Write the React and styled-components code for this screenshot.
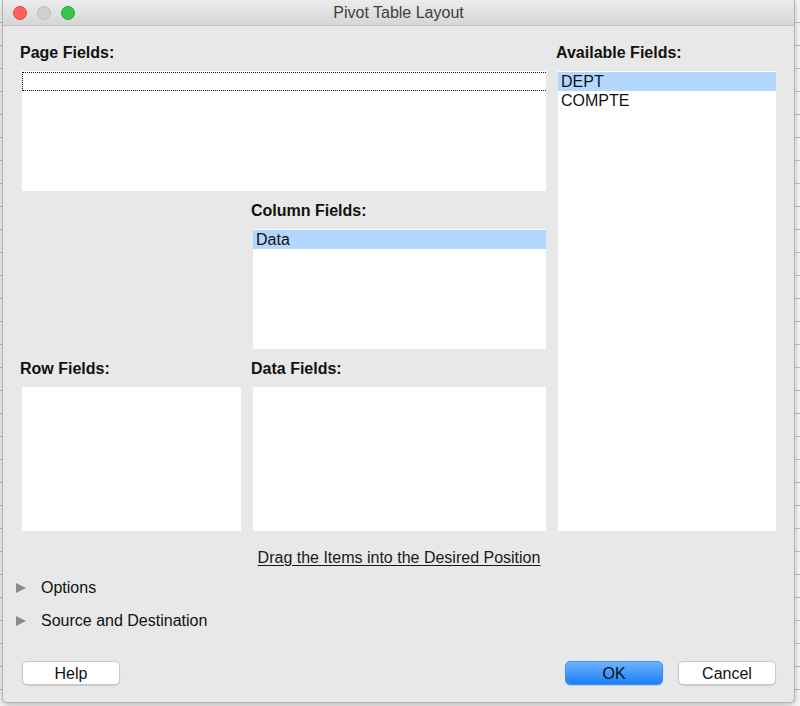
import styled, { createGlobalStyle } from "styled-components";

const GlobalStyle = createGlobalStyle`
  html, body {
    margin: 0;
    padding: 0;
  }

  body {
    width: 800px;
    height: 706px;
    overflow: hidden;
    font-family: "Liberation Sans", Arial, sans-serif;
    background: repeating-linear-gradient(
      to bottom,
      #f6f6f6 0,
      #f6f6f6 22px,
      #bdbdbd 22px,
      #bdbdbd 23px
    );
  }
`;

const StyledWindow = styled.div`
  box-sizing: border-box;
  width: 793px;
  height: 703px;
  margin-left: 2px;
  display: flex;
  flex-direction: column;
  background-color: #e8e8e8;
  border: 1px solid #b4b4b4;
  border-top: none;
  border-radius: 0 0 5px 5px;
  box-shadow: 0 2px 6px rgba(0, 0, 0, 0.25);
  color: #111;
`;

const StyledTitleBar = styled.div`
  position: relative;
  height: 25px;
  flex: none;
  display: flex;
  align-items: center;
  justify-content: center;
  background: linear-gradient(to bottom, #ececec, #d6d6d6);
  border-bottom: 1px solid #c2c2c2;
`;

const StyledLights = styled.div`
  position: absolute;
  left: 10px;
  top: 6px;
  display: flex;
  gap: 10px;
`;

const StyledLight = styled.span`
  box-sizing: border-box;
  width: 14px;
  height: 14px;
  border-radius: 50%;
  background-color: ${(p) => p.$color};
  border: 1px solid ${(p) => p.$edge};
`;

const StyledTitle = styled.span`
  font-size: 16px;
  line-height: 25px;
  color: #404040;
`;

const StyledContent = styled.div`
  flex: 1;
  display: flex;
  flex-direction: column;
  padding: 7px 18px 0 19px;
`;

const StyledGrid = styled.div`
  display: grid;
  grid-template-columns: 219px 293px 218px;
  grid-template-rows: auto 120px auto 120px auto 144px;
  column-gap: 12px;
`;

const StyledLabel = styled.h3`
  margin: 0 0 0 -2px;
  padding: 10px 0 9px;
  font-size: 16px;
  line-height: 19px;
  font-weight: bold;
  color: #111;
  grid-column: ${(p) => p.$col};
  grid-row: ${(p) => p.$row};
`;

const StyledListBox = styled.div`
  background-color: #fff;
  padding: 1px 0;
  grid-column: ${(p) => p.$col};
  grid-row: ${(p) => p.$row};
`;

const StyledListItem = styled.div`
  height: 19px;
  padding-left: 3px;
  font-size: 16px;
  line-height: 19px;
  color: #111;
  background-color: ${(p) => (p.$selected ? "#b4d7fd" : "transparent")};
`;

const StyledDropSlot = styled.div`
  height: 17px;
  border: 1px dotted #111;
  border-right: none;
`;

const StyledDragHint = styled.div`
  margin-top: 17px;
  width: 754px;
  text-align: center;
  font-size: 16px;
  line-height: 19px;
  color: #1a1a1a;
  text-decoration: underline;
  text-underline-offset: 2px;
`;

const StyledExpanders = styled.div`
  margin: 11px 0 0 -6px;
  display: flex;
  flex-direction: column;
  gap: 14px;
`;

const StyledExpander = styled.div`
  display: flex;
  align-items: center;
  gap: 15px;
  font-size: 16px;
  line-height: 19px;
`;

const StyledTriangle = styled.span`
  width: 0;
  height: 0;
  border-left: 10px solid #8b8b8b;
  border-top: 5.5px solid transparent;
  border-bottom: 5.5px solid transparent;
`;

const StyledButtonRow = styled.div`
  margin-top: 31px;
  width: 754px;
  display: flex;
  align-items: center;
`;

const StyledButton = styled.button`
  box-sizing: border-box;
  width: 98px;
  height: 24px;
  padding: 1px 0 0;
  font-family: inherit;
  font-size: 16px;
  color: #111;
  border-radius: 5px;
  border: 1px solid ${(p) => (p.$primary ? "#3d8ef0" : "#c9c9c9")};
  background: ${(p) =>
    p.$primary ? "linear-gradient(to bottom, #6db3fb, #1a80fb)" : "#fff"};
  box-shadow: 0 1px 1px rgba(0, 0, 0, 0.12);
  margin-left: ${(p) => p.$gap || "0"};
`;

const columnItems = ["Data"];
const availableItems = ["DEPT", "COMPTE"];

function App() {
  return (
    <>
      <GlobalStyle />
      <StyledWindow>
        <StyledTitleBar>
          <StyledLights>
            <StyledLight $color="#fc615d" $edge="#df4843" />
            <StyledLight $color="#d0d0d0" $edge="#bfbfbf" />
            <StyledLight $color="#34c84a" $edge="#29a53a" />
          </StyledLights>
          <StyledTitle>Pivot Table Layout</StyledTitle>
        </StyledTitleBar>

        <StyledContent>
          <StyledGrid>
            <StyledLabel $col="1 / 3" $row="1">
              Page Fields:
            </StyledLabel>
            <StyledLabel $col="3" $row="1">
              Available Fields:
            </StyledLabel>

            <StyledListBox $col="1 / 3" $row="2">
              <StyledDropSlot />
            </StyledListBox>

            <StyledListBox $col="3" $row="2 / 7">
              {availableItems.map((item, i) => (
                <StyledListItem key={item} $selected={i === 0}>
                  {item}
                </StyledListItem>
              ))}
            </StyledListBox>

            <StyledLabel $col="2" $row="3">
              Column Fields:
            </StyledLabel>
            <StyledListBox $col="2" $row="4">
              {columnItems.map((item) => (
                <StyledListItem key={item} $selected>
                  {item}
                </StyledListItem>
              ))}
            </StyledListBox>

            <StyledLabel $col="1" $row="5">
              Row Fields:
            </StyledLabel>
            <StyledLabel $col="2" $row="5">
              Data Fields:
            </StyledLabel>
            <StyledListBox $col="1" $row="6" />
            <StyledListBox $col="2" $row="6" />
          </StyledGrid>

          <StyledDragHint>Drag the Items into the Desired Position</StyledDragHint>

          <StyledExpanders>
            <StyledExpander>
              <StyledTriangle />
              Options
            </StyledExpander>
            <StyledExpander>
              <StyledTriangle />
              Source and Destination
            </StyledExpander>
          </StyledExpanders>

          <StyledButtonRow>
            <StyledButton>Help</StyledButton>
            <StyledButton $primary $gap="auto">
              OK
            </StyledButton>
            <StyledButton $gap="15px">Cancel</StyledButton>
          </StyledButtonRow>
        </StyledContent>
      </StyledWindow>
    </>
  );
}

export default App;
